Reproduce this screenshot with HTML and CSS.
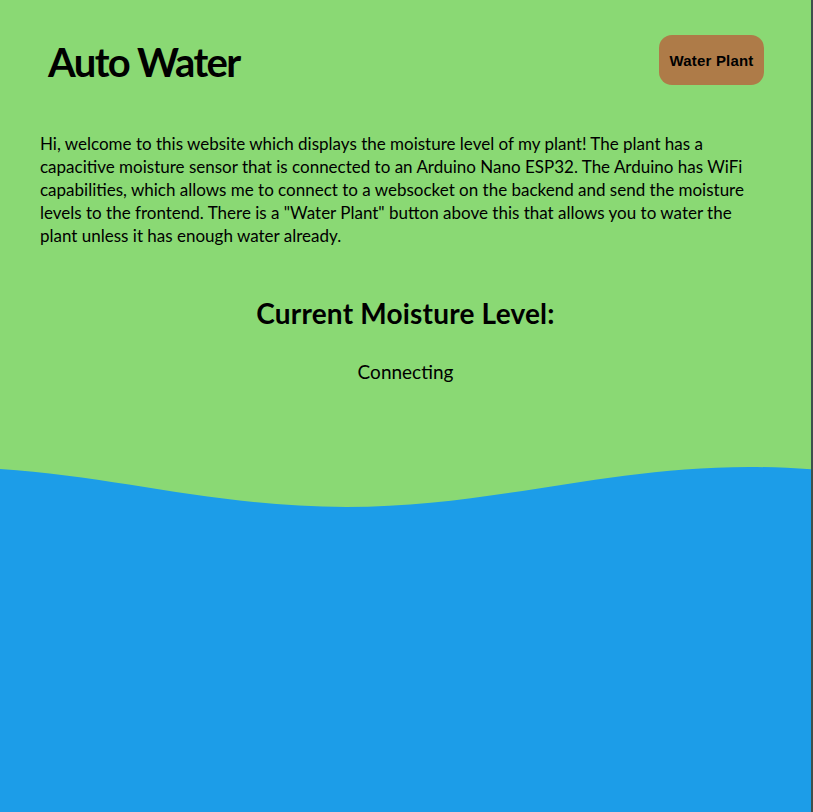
FILE: index.html
```html
<!DOCTYPE html>
<html lang="en">
<head>
<meta charset="utf-8">
<title>Auto Water</title>
<link rel="stylesheet" href="styles.css">
</head>
<body>
<div class="page">
  <svg class="wave" viewBox="0 440 813 372" preserveAspectRatio="none" aria-hidden="true">
    <path d="M -57 467 C 90 467, 200 507, 347 507 C 494 507, 604 467, 751 467 C 898 467, 1008 507, 1155 507 L 1155 812 L -57 812 Z" fill="#1c9de8"/>
  </svg>
  <header class="top">
    <h1 class="title">Auto Water</h1>
    <button class="water-btn" type="button">Water Plant</button>
  </header>
  <main class="content">
    <p class="intro">Hi, welcome to this website which displays the moisture level of my plant! The plant has a capacitive moisture sensor that is connected to an Arduino Nano ESP32. The Arduino has WiFi capabilities, which allows me to connect to a websocket on the backend and send the moisture levels to the frontend. There is a "Water Plant" button above this that allows you to water the plant unless it has enough water already.</p>
    <h2 class="level-title">Current Moisture Level:</h2>
    <p class="status">Connecting</p>
  </main>
</div>
</body>
</html>
```
FILE: styles.css
```css
html, body {
  margin: 0;
  padding: 0;
  height: 100%;
}
body {
  background: #3e4f4b;
  font-family: Lato, "Noto Sans", sans-serif;
  color: #000;
}
.page {
  position: relative;
  height: 812px;
  margin-right: 2px;
  background: #8ad974;
  overflow: hidden;
}
.wave {
  position: absolute;
  left: 0;
  top: 440px;
  width: 811px;
  height: 372px;
  display: block;
}
.top {
  position: relative;
  display: flex;
  justify-content: space-between;
  align-items: center;
  padding: 35px 47px 0 48px;
}
.title {
  margin: 0;
  font-size: 40px;
  font-weight: 700;
  line-height: 52px;
  letter-spacing: -1.6px;
  position: relative;
  top: 1px;
}
.water-btn {
  width: 105px;
  height: 50px;
  border: none;
  border-radius: 13px;
  background: #ae7b48;
  font-family: "Liberation Sans", Arial, sans-serif;
  font-weight: 700;
  font-size: 15px;
  letter-spacing: 0.2px;
  color: #000;
  padding: 0;
  position: relative;
  top: -1px;
}
.content {
  position: relative;
  padding: 45px 40px 0 40px;
}
.intro {
  margin: 0;
  font-size: 17px;
  line-height: 23px;
}
.level-title {
  margin: 48px 0 0;
  text-align: center;
  font-size: 28px;
  line-height: 36px;
  font-weight: 700;
  letter-spacing: 0.2px;
}
.status {
  margin: 29px 0 0;
  text-align: center;
  font-size: 19px;
  line-height: 24px;
}
```
